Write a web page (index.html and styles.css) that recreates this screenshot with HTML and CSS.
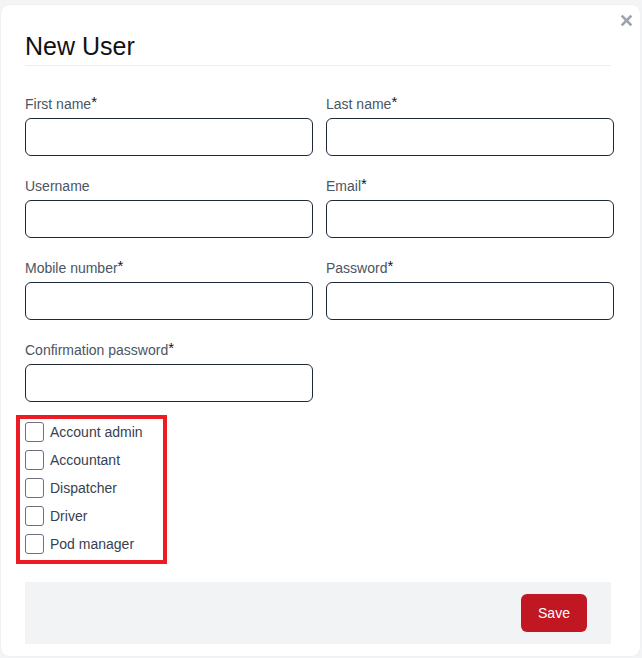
FILE: index.html
```html
<!DOCTYPE html>
<html>
<head>
<meta charset="utf-8">
<link rel="stylesheet" href="styles.css">
</head>
<body>
<div class="modal">
  <button class="close" aria-label="Close">
    <svg width="11" height="11" viewBox="0 0 11 11"><path d="M1.5 1.5L9.5 9.5M9.5 1.5L1.5 9.5" stroke="#9ca3af" stroke-width="2.6" stroke-linecap="square"/></svg>
  </button>
  <h1 class="title">New User</h1>
  <div class="fields">
    <div class="field"><label>First name<span class="req">*</span></label><input type="text"></div>
    <div class="field"><label>Last name<span class="req">*</span></label><input type="text"></div>
    <div class="field"><label>Username</label><input type="text"></div>
    <div class="field"><label>Email<span class="req">*</span></label><input type="text"></div>
    <div class="field"><label>Mobile number<span class="req">*</span></label><input type="text"></div>
    <div class="field"><label>Password<span class="req">*</span></label><input type="password"></div>
    <div class="field"><label>Confirmation password<span class="req">*</span></label><input type="password"></div>
  </div>
  <div class="roles">
    <label class="role"><span class="box"></span>Account admin</label>
    <label class="role"><span class="box"></span>Accountant</label>
    <label class="role"><span class="box"></span>Dispatcher</label>
    <label class="role"><span class="box"></span>Driver</label>
    <label class="role"><span class="box"></span>Pod manager</label>
  </div>
  <div class="footer">
    <button class="save">Save</button>
  </div>
</div>
</body>
</html>
```
FILE: styles.css
```css
* { box-sizing: border-box; }
html, body { margin: 0; padding: 0; }
body {
  background: #f3f4f6;
  font-family: "Liberation Sans", Arial, sans-serif;
  width: 642px;
  height: 658px;
  overflow: hidden;
}
.modal {
  position: relative;
  margin: 5px 2px 0 1px;
  height: 651px;
  background: #fff;
  border-radius: 8px;
  box-shadow: 0 0 1px rgba(0,0,0,0.12);
  padding: 25px 28px 0 24px;
}
.close {
  position: absolute;
  top: 10px;
  right: 8px;
  border: 0;
  background: none;
  padding: 0;
  width: 11px;
  height: 11px;
  display: flex;
}
.title {
  margin: 0;
  font-weight: 400;
  font-size: 25px;
  line-height: 32px;
  color: #111;
  padding-bottom: 3px;
  border-bottom: 1px solid #eceef1;
  width: 586px;
}
.fields {
  display: grid;
  grid-template-columns: 288px 288px;
  column-gap: 13px;
  row-gap: 19px;
  margin-top: 27px;
}
.field { display: flex; flex-direction: column; gap: 4px; }
.field label {
  font-size: 14px;
  line-height: 20px;
  padding-top: 1px;
  color: #4b5563;
}
.req { color: #111827; font-size: 15px; position: relative; top: -2px; }
.field input {
  height: 38px;
  border: 1px solid #1f2937;
  border-radius: 6px;
  background: #fff;
  outline: none;
}
.roles {
  display: flex;
  flex-direction: column;
  gap: 8px;
  width: 151px;
  margin: 13px 0 0 -9px;
  padding: 3px 0 6px 5px;
  border: 4px solid #ed1c24;
}
.role {
  display: flex;
  align-items: center;
  gap: 6px;
  height: 20px;
  font-size: 14px;
  color: #374151;
}
.box {
  width: 19px;
  height: 20px;
  border: 1px solid #6b7280;
  border-radius: 3px;
  background: #fff;
}
.footer {
  margin-top: 18px;
  width: 586px;
  height: 62px;
  background: #f2f3f5;
  display: flex;
  justify-content: flex-end;
  align-items: center;
  padding-right: 24px;
}
.save {
  width: 66px;
  height: 38px;
  border: 0;
  border-radius: 6px;
  background: #c01722;
  color: #fff;
  font-family: "Liberation Sans", Arial, sans-serif;
  font-size: 14px;
}
```
